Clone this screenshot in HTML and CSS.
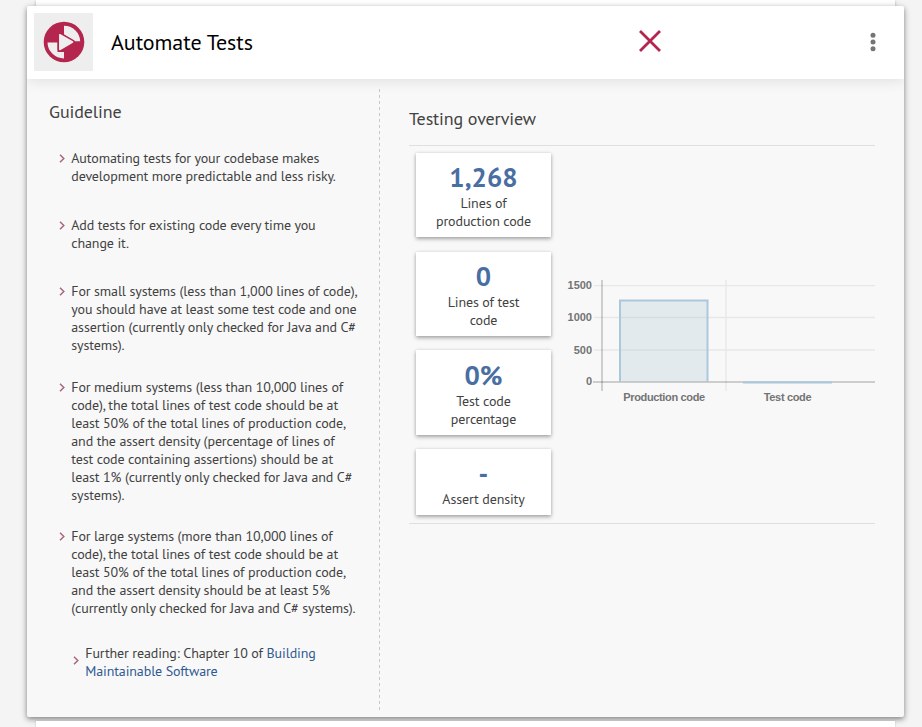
FILE: index.html
```html
<!DOCTYPE html>
<html lang="en">
<head>
<meta charset="utf-8">
<title>Automate Tests</title>
<link rel="stylesheet" href="styles.css">
</head>
<body>
<div class="peek peek-top"></div>
<main class="card">
  <header class="card-header">
    <div class="tile">
      <svg width="42" height="42" viewBox="0 0 42 42">
        <circle cx="21" cy="21" r="20.3" fill="#b5264e"/>
        <path d="M21 4.8A16.2 16.2 0 0 1 37.200 20.300H31L21 13.500Z" fill="#eee"/>
        <path d="M4.500 21.500H14.500V31H21V37.500A16.500 16.500 0 0 1 4.500 21.500Z" fill="#eee"/>
        <path d="M16.800 13.700V28.500L29.600 21Z" fill="#eee" stroke="#b5264e" stroke-width="4.600" stroke-linejoin="round"/>
        <path d="M16.800 13.700V28.500L29.600 21Z" fill="#eee" stroke="#eee" stroke-width="1.500" stroke-linejoin="round"/>
      </svg>
    </div>
    <h1 class="title">Automate Tests</h1>
    <svg class="cross" width="24" height="24" viewBox="0 0 24 24"><path d="M2 2L22 22M22 2L2 22" stroke="#b5264e" stroke-width="2.800" fill="none"/></svg>
    <svg class="menu" width="6" height="20" viewBox="0 0 6 20" fill="#757575"><circle cx="3" cy="3.200" r="2.500"/><circle cx="3" cy="10" r="2.500"/><circle cx="3" cy="16.800" r="2.500"/></svg>
  </header>
  <div class="card-body">
    <section class="guideline">
      <h2 class="heading">Guideline</h2>
      <ul class="rules">
        <li><svg class="chev" viewBox="0 0 6 9"><path d="M1 .8L4.800 4.500L1 8.200"/></svg><p>Automating tests for your codebase makes<br>development more predictable and less risky.</p></li>
        <li class="gap-31"><svg class="chev" viewBox="0 0 6 9"><path d="M1 .8L4.800 4.500L1 8.200"/></svg><p>Add tests for existing code every time you<br>change it.</p></li>
        <li class="gap-30"><svg class="chev" viewBox="0 0 6 9"><path d="M1 .8L4.800 4.500L1 8.200"/></svg><p>For small systems (less than 1,000 lines of code),<br>you should have at least some test code and one<br>assertion (currently only checked for Java and C#<br>systems).</p></li>
        <li class="gap-24"><svg class="chev" viewBox="0 0 6 9"><path d="M1 .8L4.800 4.500L1 8.200"/></svg><p>For medium systems (less than 10,000 lines of<br>code), the total lines of test code should be at<br>least 50% of the total lines of production code,<br>and the assert density (percentage of lines of<br>test code containing assertions) should be at<br>least 1% (currently only checked for Java and C#<br>systems).</p></li>
        <li class="gap-23"><svg class="chev" viewBox="0 0 6 9"><path d="M1 .8L4.800 4.500L1 8.200"/></svg><p>For large systems (more than 10,000 lines of<br>code), the total lines of test code should be at<br>least 50% of the total lines of production code,<br>and the assert density should be at least 5%<br>(currently only checked for Java and C# systems).</p></li>
        <li class="further"><svg class="chev" viewBox="0 0 6 9"><path d="M1 .8L4.800 4.500L1 8.200"/></svg><p>Further reading: Chapter 10 of <a>Building<br>Maintainable Software</a></p></li>
      </ul>
    </section>
    <section class="overview">
      <h2 class="heading">Testing overview</h2>
      <div class="panel">
        <div class="stats">
          <div class="stat"><strong>1,268</strong><span>Lines of<br>production code</span></div>
          <div class="stat"><strong>0</strong><span>Lines of test<br>code</span></div>
          <div class="stat tall"><strong>0%</strong><span>Test code<br>percentage</span></div>
          <div class="stat short"><strong>-</strong><span>Assert density</span></div>
        </div>
        <svg class="chart" width="315" height="140" viewBox="560 270 315 140">
          <g stroke="#000" stroke-opacity=".065" stroke-width="1.300">
            <path d="M594 285.700H875M594 317.500H875M594 350H875M726 280V391" fill="none"/>
          </g>
          <path d="M602 280V391" stroke="#000" stroke-opacity=".17" stroke-width="2"/>
          <path d="M593 382H875" stroke="#000" stroke-opacity=".23" stroke-width="1.500"/>
          <path d="M620 382V300.500H707.500V382" fill="#97bbcd" fill-opacity=".22" stroke="#a9c8d9" stroke-width="2"/>
          <path d="M743 382.500H832" stroke="#a9c8d9" stroke-width="2"/>
          <g class="ticks" text-anchor="end"><text x="592" y="289">1500</text><text x="592" y="320.500">1000</text><text x="592" y="353.500">500</text><text x="592" y="385">0</text></g>
          <g class="names" text-anchor="middle"><text x="664" y="401">Production code</text><text x="787.500" y="401">Test code</text></g>
        </svg>
      </div>
    </section>
  </div>
</main>
<div class="peek peek-bottom"></div>
</body>
</html>
```

FILE: styles.css
```css
* { box-sizing: border-box; }
html { overflow: hidden; }
body {
  margin: 0;
  height: 727px;
  overflow: hidden;
  background: #f4f4f4;
  color: #424242;
  font: 14px/18px "PT Sans", "Open Sans", sans-serif;
}
h1, h2, p, ul { margin: 0; padding: 0; font-weight: 400; }
.peek { margin: 0 27px 0 36px; background: #fff; box-shadow: 0 1px 3px rgba(0,0,0,.3); }
.peek-top { height: 6px; }
.peek-bottom { position: relative; height: 20px; margin-top: 4px; box-shadow: 0 0 2px rgba(0,0,0,.2); }
.card {
  position: relative;
  width: 877px;
  height: 711px;
  margin-left: 27px;
  background: #f8f8f8;
  border-radius: 2px;
  box-shadow: 0 2px 5px rgba(0,0,0,.36), 0 2px 9px rgba(0,0,0,.16);
}
.card-header {
  position: relative;
  display: flex;
  align-items: center;
  height: 73px;
  padding: 0 28px 0 7px;
  background: #fff;
  border-radius: 2px 2px 0 0;
  box-shadow: 0 2px 14px rgba(0,0,0,.1);
  clip-path: inset(0 0 -20px 0);
}
.tile { display: grid; place-items: center; width: 59px; height: 58px; margin-bottom: 1px; background: #eee; }
.title { width: 200px; margin: 0 0 2px 18px; color: #000; font-size: 22px; line-height: 26px; letter-spacing: -.05px; white-space: nowrap; }
.cross { margin: 0 0 3px 327px; }
.menu { margin: 0 0 1px auto; }
.card-body { display: grid; grid-template-columns: 353px 1fr; height: 638px; }
.guideline {
  margin: 10px 0 6px;
  padding: 11px 0 0 22px;
  background: repeating-linear-gradient(#c8c8c8 0 3px, transparent 3px 6px) right / 1px 100% no-repeat;
}
.heading { font-size: 18px; line-height: 24px; letter-spacing: -.1px; white-space: nowrap; }
.rules { padding: 25px 0 0 10px; list-style: none; letter-spacing: -.12px; white-space: nowrap; }
.rules li { display: flex; gap: 6.300px; }
.chev { flex: none; width: 6px; height: 9px; margin: 5px 0 0; }
.chev path { fill: none; stroke: #a8667f; stroke-width: 1.5; }
.gap-31 { margin-top: 31px; }
.gap-30 { margin-top: 30px; }
.gap-24 { margin-top: 24px; }
.gap-23 { margin-top: 23px; }
.rules .further { margin: 27px 0 0 14px; }
.further .chev { margin-top: 12px; }
a { color: #305a91; }
.overview { padding: 28px 29px 0; }
.panel { display: flex; height: 379px; margin-top: 14px; padding: 7px 0 0 7px; border: solid #dfdfdf; border-width: 1px 0; }
.stats { display: flex; flex-direction: column; gap: 14px; width: 135px; }
.stat { display: flex; flex-direction: column; height: 84px; margin-bottom: 1px; padding-top: 9px; background: #fff; text-align: center; box-shadow: 0 2px 4px rgba(0,0,0,.32), 0 0 3px rgba(0,0,0,.1); letter-spacing: -.12px; }
.stat strong { height: 32px; color: #486ea2; font-size: 27px; font-weight: 700; line-height: 31px; letter-spacing: .1px; }
.tall { height: 85px; margin: -1px 0 0; padding-top: 10px; }
.short { height: 66px; }
.chart { margin: 117px 0 0 9px; overflow: visible; }
.chart text { fill: #747474; font: bold 11px "Liberation Sans", sans-serif; }
.chart .names text { letter-spacing: -.35px; }
```
